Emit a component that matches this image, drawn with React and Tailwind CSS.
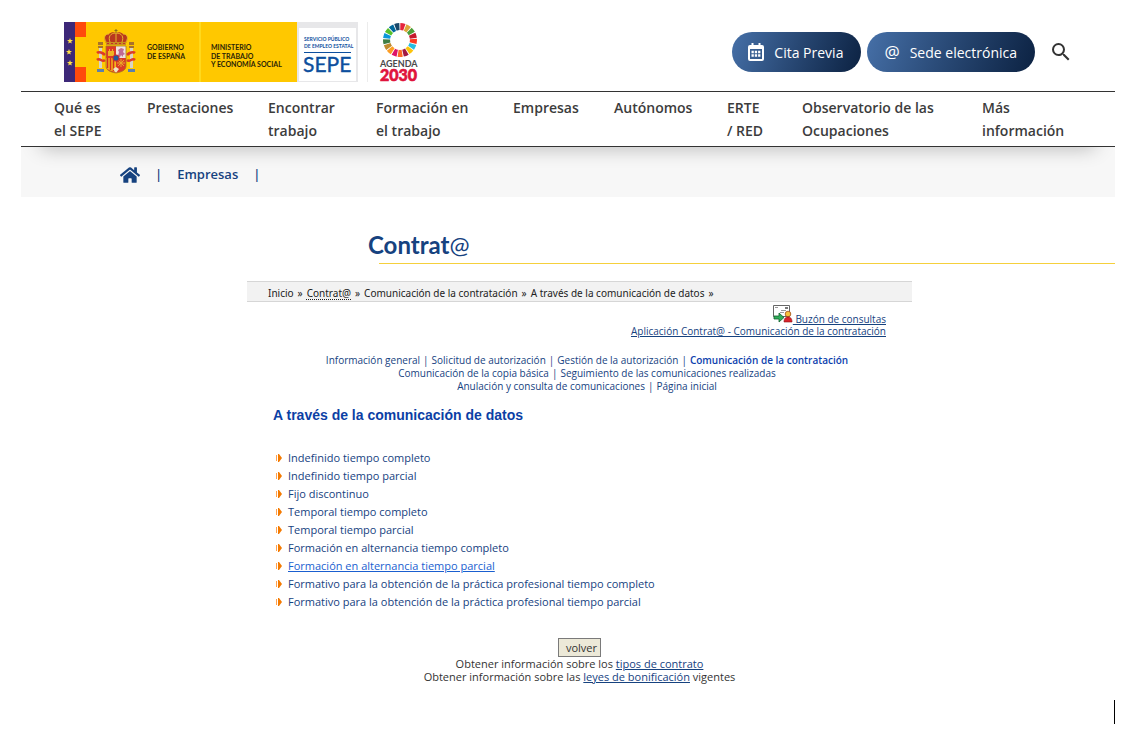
import React from 'react';
import { FaHome } from 'react-icons/fa';
import { MdSearch } from 'react-icons/md';

const navItems = [
  ['Qué es', 'el SEPE'],
  ['Prestaciones'],
  ['Encontrar', 'trabajo'],
  ['Formación en', 'el trabajo'],
  ['Empresas'],
  ['Autónomos'],
  ['ERTE', '/ RED'],
  ['Observatorio de las', 'Ocupaciones'],
  ['Más', 'información'],
];

const trail = ['Inicio', 'Contrat@', 'Comunicación de la contratación', 'A través de la comunicación de datos'];

const sections = [
  ['Información general', 'Solicitud de autorización', 'Gestión de la autorización', 'Comunicación de la contratación'],
  ['Comunicación de la copia básica', 'Seguimiento de las comunicaciones realizadas'],
  ['Anulación y consulta de comunicaciones', 'Página inicial'],
];

const currentSection = 'Comunicación de la contratación';

const contracts = [
  'Indefinido tiempo completo',
  'Indefinido tiempo parcial',
  'Fijo discontinuo',
  'Temporal tiempo completo',
  'Temporal tiempo parcial',
  'Formación en alternancia tiempo completo',
  'Formación en alternancia tiempo parcial',
  'Formativo para la obtención de la práctica profesional tiempo completo',
  'Formativo para la obtención de la práctica profesional tiempo parcial',
];

const activeContract = 'Formación en alternancia tiempo parcial';

const wheelColors = [
  '#e5243b', '#dda63a', '#4c9f38', '#c5192d', '#ff3a21', '#26bde2', '#fcc30b', '#a21942', '#fd6925',
  '#dd1367', '#fd9d24', '#bf8b2e', '#3f7e44', '#0a97d9', '#56c02b', '#00689d', '#19486a',
];

const Star = ({ x, y }) => (
  <path
    transform={`translate(${x} ${y})`}
    d="M0-3 .8-1 3-.9 1.2.5 1.8 2.6 0 1.4-1.8 2.6-1.2.5-3-.9-.8-1z"
    fill="#ffe14a"
  />
);

const CoatOfArms = () => (
  <g>
    {/* crown */}
    <path d="M42 21c-3-5-1-9 3-9 2-2 5-2 7-1 2-1 5-1 7 1 4 0 6 4 3 9z" fill="#b9381f" />
    <path
      d="M42 20c-3-5-1-8 3-8M46 20c-2-5 0-9 6-9M52 20v-9M58 20c2-5 0-9-6-9M62 20c3-5 1-8-3-8"
      fill="none"
      stroke="#e8b52b"
      strokeWidth="1"
    />
    <path d="M52 7v4M50.500 8.500h3" stroke="#8a6a1c" strokeWidth="1" />
    <path d="M42 20h20v3H42z" fill="#c98f1f" />
    <path d="M43 21.500h18" stroke="#c3302b" strokeWidth="1" strokeDasharray="2 2" />
    {/* columns */}
    <path d="M35 26h3v20h-3zM66 26h3v20h-3z" fill="#d9d4c4" />
    <path d="M34 24h5v2h-5zM65 24h5v2h-5zM34 20h5v3h-5zM65 20h5v3h-5z" fill="#a8722b" />
    <path d="M33 47h7v3h-7zM64 47h7v3h-7z" fill="#5b7fae" />
    <path
      d="M33 31c2-2 6 0 8 2M33 38c3-3 5 3 8 0M71 31c-2-2-6 0-8 2M71 38c-3-3-5 3-8 0"
      fill="none"
      stroke="#dd3b28"
      strokeWidth="2.500"
    />
    {/* shield */}
    <path d="M42 24h20v20c0 4-4 6-10 7-6-1-10-3-10-7z" fill="#dc3a27" />
    <path d="M52 24h10v12H52z" fill="#efe3df" />
    <path d="M42 36h10v14c-6-1-10-3-10-6z" fill="#f2b51b" />
    <path d="M43.500 36v10M46.500 36v12M49.500 36v13" stroke="#d5301f" strokeWidth="1.500" />
    <path d="M44 34v-5h1v-2h1v2h2v-2h1v2h1v5z" fill="#f0b422" />
    <path d="M54 34l1-4-1-2 3-2 3 1-1 3 2 2-2 1v2l-2-2-1 2z" fill="#bf6b94" />
    <path d="M54 38l6 6M60 38l-6 6M57 37v8M53 41h8" stroke="#e8a926" strokeWidth="1" />
    <circle cx="52" cy="36" r="3.500" fill="#c93030" />
    <circle cx="52" cy="36" r="2.500" fill="#235a9c" />
    <path d="M49 47l3-2 3 2-3 4z" fill="#efe3c4" />
    <path d="M42 24h20v20c0 4-4 6-10 7-6-1-10-3-10-7z" fill="none" stroke="#a9791f" strokeWidth=".8" />
  </g>
);

const GovernmentLogo = () => (
  <svg
    width="294"
    height="60"
    viewBox="0 0 294 60"
    role="img"
    aria-label="Gobierno de España"
    className="shrink-0 font-['Lato']"
  >
    <path d="M0 0h233v60H0z" fill="#ffc800" />
    <path d="M0 0h11v60H0z" fill="#3d2878" />
    <path d="M11 0h11v15H11zM11 45h11v15H11z" fill="#ff4a0c" />
    <path d="M135 0h2v60h-2z" fill="#ffd91c" />
    <Star x={6} y={19} />
    <Star x={5} y={30} />
    <Star x={6} y={41} />
    <CoatOfArms />
    <g fill="#2b2407" fontSize="7" fontWeight="700">
      <text x="83" y="28">GOBIERNO</text>
      <text x="83" y="37">DE ESPAÑA</text>
      <text x="147" y="28">MINISTERIO</text>
      <text x="147" y="37">DE TRABAJO</text>
      <text x="147" y="45">Y ECONOMÍA SOCIAL</text>
    </g>
    <path d="M233 0h61v60h-61z" fill="#e7e7e9" />
    <path d="M235 6h57v53h-57z" fill="#fff" />
    <g fill="#0d4f9e">
      <text x="240" y="19" fontSize="5" fontWeight="700">SERVICIO PÚBLICO</text>
      <text x="240" y="26" fontSize="5" fontWeight="700">DE EMPLEO ESTATAL</text>
      <path d="M240 30h47v1h-47z" />
      <text x="239" y="50" fontSize="21" fontWeight="400" stroke="#0d4f9e" strokeWidth=".4">SEPE</text>
    </g>
  </svg>
);

const AgendaLogo = () => (
  <svg width="54" height="64" viewBox="0 0 54 64" role="img" aria-label="Agenda 2030" className="shrink-0 font-['Lato']">
    <path d="M0 0h1v60H0z" fill="#ececec" />
    {wheelColors.map((color, i) => (
      <path
        key={color}
        transform={`rotate(${(i * 360) / 17 + 10} 33 18)`}
        d="M31.500 8.200 30.400 1.200a17 17 0 0 1 5.200 0L34.500 8.200a10 10 0 0 0-3 0z"
        fill={color}
      />
    ))}
    <text x="13" y="45" fontSize="9" fill="#4a4a4a" fontWeight="700">AGENDA</text>
    <text x="13" y="59" fontSize="16" fill="#e0143c" stroke="#e0143c" strokeWidth=".6" fontWeight="900">2030</text>
  </svg>
);

const CalendarIcon = () => (
  <svg width="16" height="18" viewBox="0 0 16 18" fill="none" stroke="currentColor" aria-hidden="true">
    <rect x="1" y="3" width="14" height="14" rx="1" strokeWidth="2" />
    <path d="M1 5h14" strokeWidth="2" />
    <path d="M4.500 0v4M11.500 0v4" strokeWidth="2" />
    <path d="M3.500 9h9M3.500 12.500h9" strokeWidth="2.500" strokeDasharray="2.300 1" />
  </svg>
);

const MailboxIcon = () => (
  <svg width="20" height="18" viewBox="0 0 20 18" className="inline align-baseline" aria-hidden="true">
    <path d="M.5.500h16v11H.5z" fill="#fff" stroke="#666" />
    <path d="M2 2.500h3M8 5.500h5M7 7.500h4" stroke="#999" />
    <path d="M12 2h3v2h-3z" fill="#777" />
    <path d="M1 11h5V8l5 4.500L6 17v-3H1z" fill="#2fae5b" stroke="#12602c" strokeWidth=".8" />
    <circle cx="15" cy="9" r="2.800" fill="#f6c23c" stroke="#a34c18" strokeWidth=".8" />
    <path d="M11 17c0-4 2-5 4-5s4 1 4 5z" fill="#d8232a" stroke="#8a1015" strokeWidth=".6" />
  </svg>
);

const ArrowBullet = () => (
  <svg width="6" height="8" viewBox="0 0 6 8" aria-hidden="true" className="shrink-0">
    <path d="M0 1h1v6H0z" fill="#ffa14d" />
    <path d="M2 0h1l3 4-3 4H2z" fill="#f47a00" />
  </svg>
);

const Header = () => (
  <header className="flex items-start justify-between pt-[22px] pb-[5px] pl-[43px] pr-[42px]">
    <a href="#inicio" className="flex items-start gap-[9px]">
      <GovernmentLogo />
      <AgendaLogo />
    </a>
    <div className="flex items-center mt-[10px] text-[14px] text-white">
      <a
        href="#cita"
        className="flex h-10 items-center gap-[10px] rounded-full bg-linear-110 from-[#4670a8] to-[#0c2242] pl-[16px] pr-[18px]"
      >
        <CalendarIcon />
        Cita Previa
      </a>
      <a
        href="#sede"
        className="ml-[6px] flex h-10 items-center gap-[10px] rounded-full bg-linear-110 from-[#4670a8] to-[#0c2242] pl-[17px] pr-[18px]"
      >
        <span className="text-[17px]">@</span>
        Sede electrónica
      </a>
      <button type="button" aria-label="Buscar" className="ml-[14px] text-[#333]">
        <MdSearch className="size-6" />
      </button>
    </div>
  </header>
);

const MainNav = () => (
  <nav className="relative border-y border-[#333] bg-white shadow-[0_20px_20px_-20px_rgba(0,0,0,0.3)]">
    <ul className="grid grid-cols-[93fr_121fr_108fr_137fr_101fr_113fr_75fr_180fr_133fr] py-[4px] pl-[33px] text-[14px] leading-[23px] font-semibold text-[#3c3c3c]">
      {navItems.map((lines) => (
        <li key={lines[0]}>
          <a href="#menu">
            {lines.map((line) => (
              <span key={line} className="block whitespace-nowrap">{line}</span>
            ))}
          </a>
        </li>
      ))}
    </ul>
  </nav>
);

const Breadcrumb = () => (
  <div className="flex h-[50px] items-center bg-[#f7f7f7] pl-[99px] pt-[5px] text-[13px] font-semibold text-[#16427f]">
    <a href="#inicio" aria-label="Inicio">
      <FaHome className="size-5" />
    </a>
    <span className="ml-[15px]">|</span>
    <a href="#empresas" className="ml-[15px]">Empresas</a>
    <span className="ml-[15px]">|</span>
  </div>
);

const Trail = () => (
  <div className="flex gap-1 border-y border-[#d6d6d6] bg-[#f2f2f2] pl-[21px] pt-[3px] font-['Noto_Sans'] text-[10px] leading-[16px] text-[#222]">
    {trail.map((label) => (
      <React.Fragment key={label}>
        {label === 'Contrat@' ? (
          <a href="#contrata" className="underline decoration-dotted underline-offset-2">{label}</a>
        ) : (
          <span>{label}</span>
        )}
        <span>»</span>
      </React.Fragment>
    ))}
  </div>
);

const SectionLinks = () => (
  <nav className="mt-[17px] pl-[15px] text-center text-[10px] leading-[13px] text-[#16427f]">
    {sections.map((row) => (
      <div key={row[0]}>
        {row.map((label, index) => (
          <React.Fragment key={label}>
            {index > 0 && <span className="px-[3px]">|</span>}
            <a
              href="#seccion"
              className={label === currentSection ? 'font-semibold text-[#0c3fae]' : ''}
            >
              {label}
            </a>
          </React.Fragment>
        ))}
      </div>
    ))}
  </nav>
);

const App = () => {
  return (
    <div className="ml-[21px] mr-[23px] bg-white font-['Open_Sans',sans-serif]">
      <Header />
      <MainNav />
      <Breadcrumb />

      <h1 className="mt-[32px] ml-[347px] font-['Lato'] text-[24px] leading-[32px] font-bold text-[#16427f]">
        Contrat<span className="font-normal">@</span>
      </h1>
      <div className="mt-[2px] ml-[358px] h-px bg-[#f5d03c]" />

      <main className="pl-[23px]">
        <div className="mx-auto mt-[17px] max-w-[665px]">
          <Trail />

          <div className="mt-[3px] pr-[26px] text-right text-[10px] leading-[12px] text-[#16427f]">
            <a href="#buzon" className="underline">
              <MailboxIcon /> Buzón de consultas
            </a>
            <br />
            <a href="#aplicacion" className="underline">Aplicación Contrat@ - Comunicación de la contratación</a>
          </div>

          <SectionLinks />

          <h2 className="mt-[12px] pl-[26px] font-['Liberation_Sans'] text-[14px] leading-[20px] font-bold text-[#0c3fa5]">
            A través de la comunicación de datos
          </h2>

          <ul className="mt-[24px] pl-[29px] text-[11px] leading-[18px] text-[#16427f]">
            {contracts.map((label) => (
              <li key={label} className="flex items-center gap-[6px]">
                <ArrowBullet />
                <a href="#contrato" className={label === activeContract ? 'text-[#1a5fd0] underline' : ''}>
                  {label}
                </a>
              </li>
            ))}
          </ul>

          <div className="mt-[27px] text-center text-[11px] leading-[13px] text-[#333]">
            <button
              type="button"
              className="mx-auto block h-[19px] w-[43px] border border-[#7a7a7a] bg-[#ece9d8] pl-[4px]"
            >
              volver
            </button>
            <p>
              Obtener información sobre los <a href="#tipos" className="text-[#16427f] underline">tipos de contrato</a>
            </p>
            <p>
              Obtener información sobre las <a href="#leyes" className="text-[#16427f] underline">leyes de bonificación</a> vigentes
            </p>
          </div>
        </div>
      </main>

      <div className="mt-[17px] h-6 border-r border-black" />
    </div>
  );
};

export default App;
